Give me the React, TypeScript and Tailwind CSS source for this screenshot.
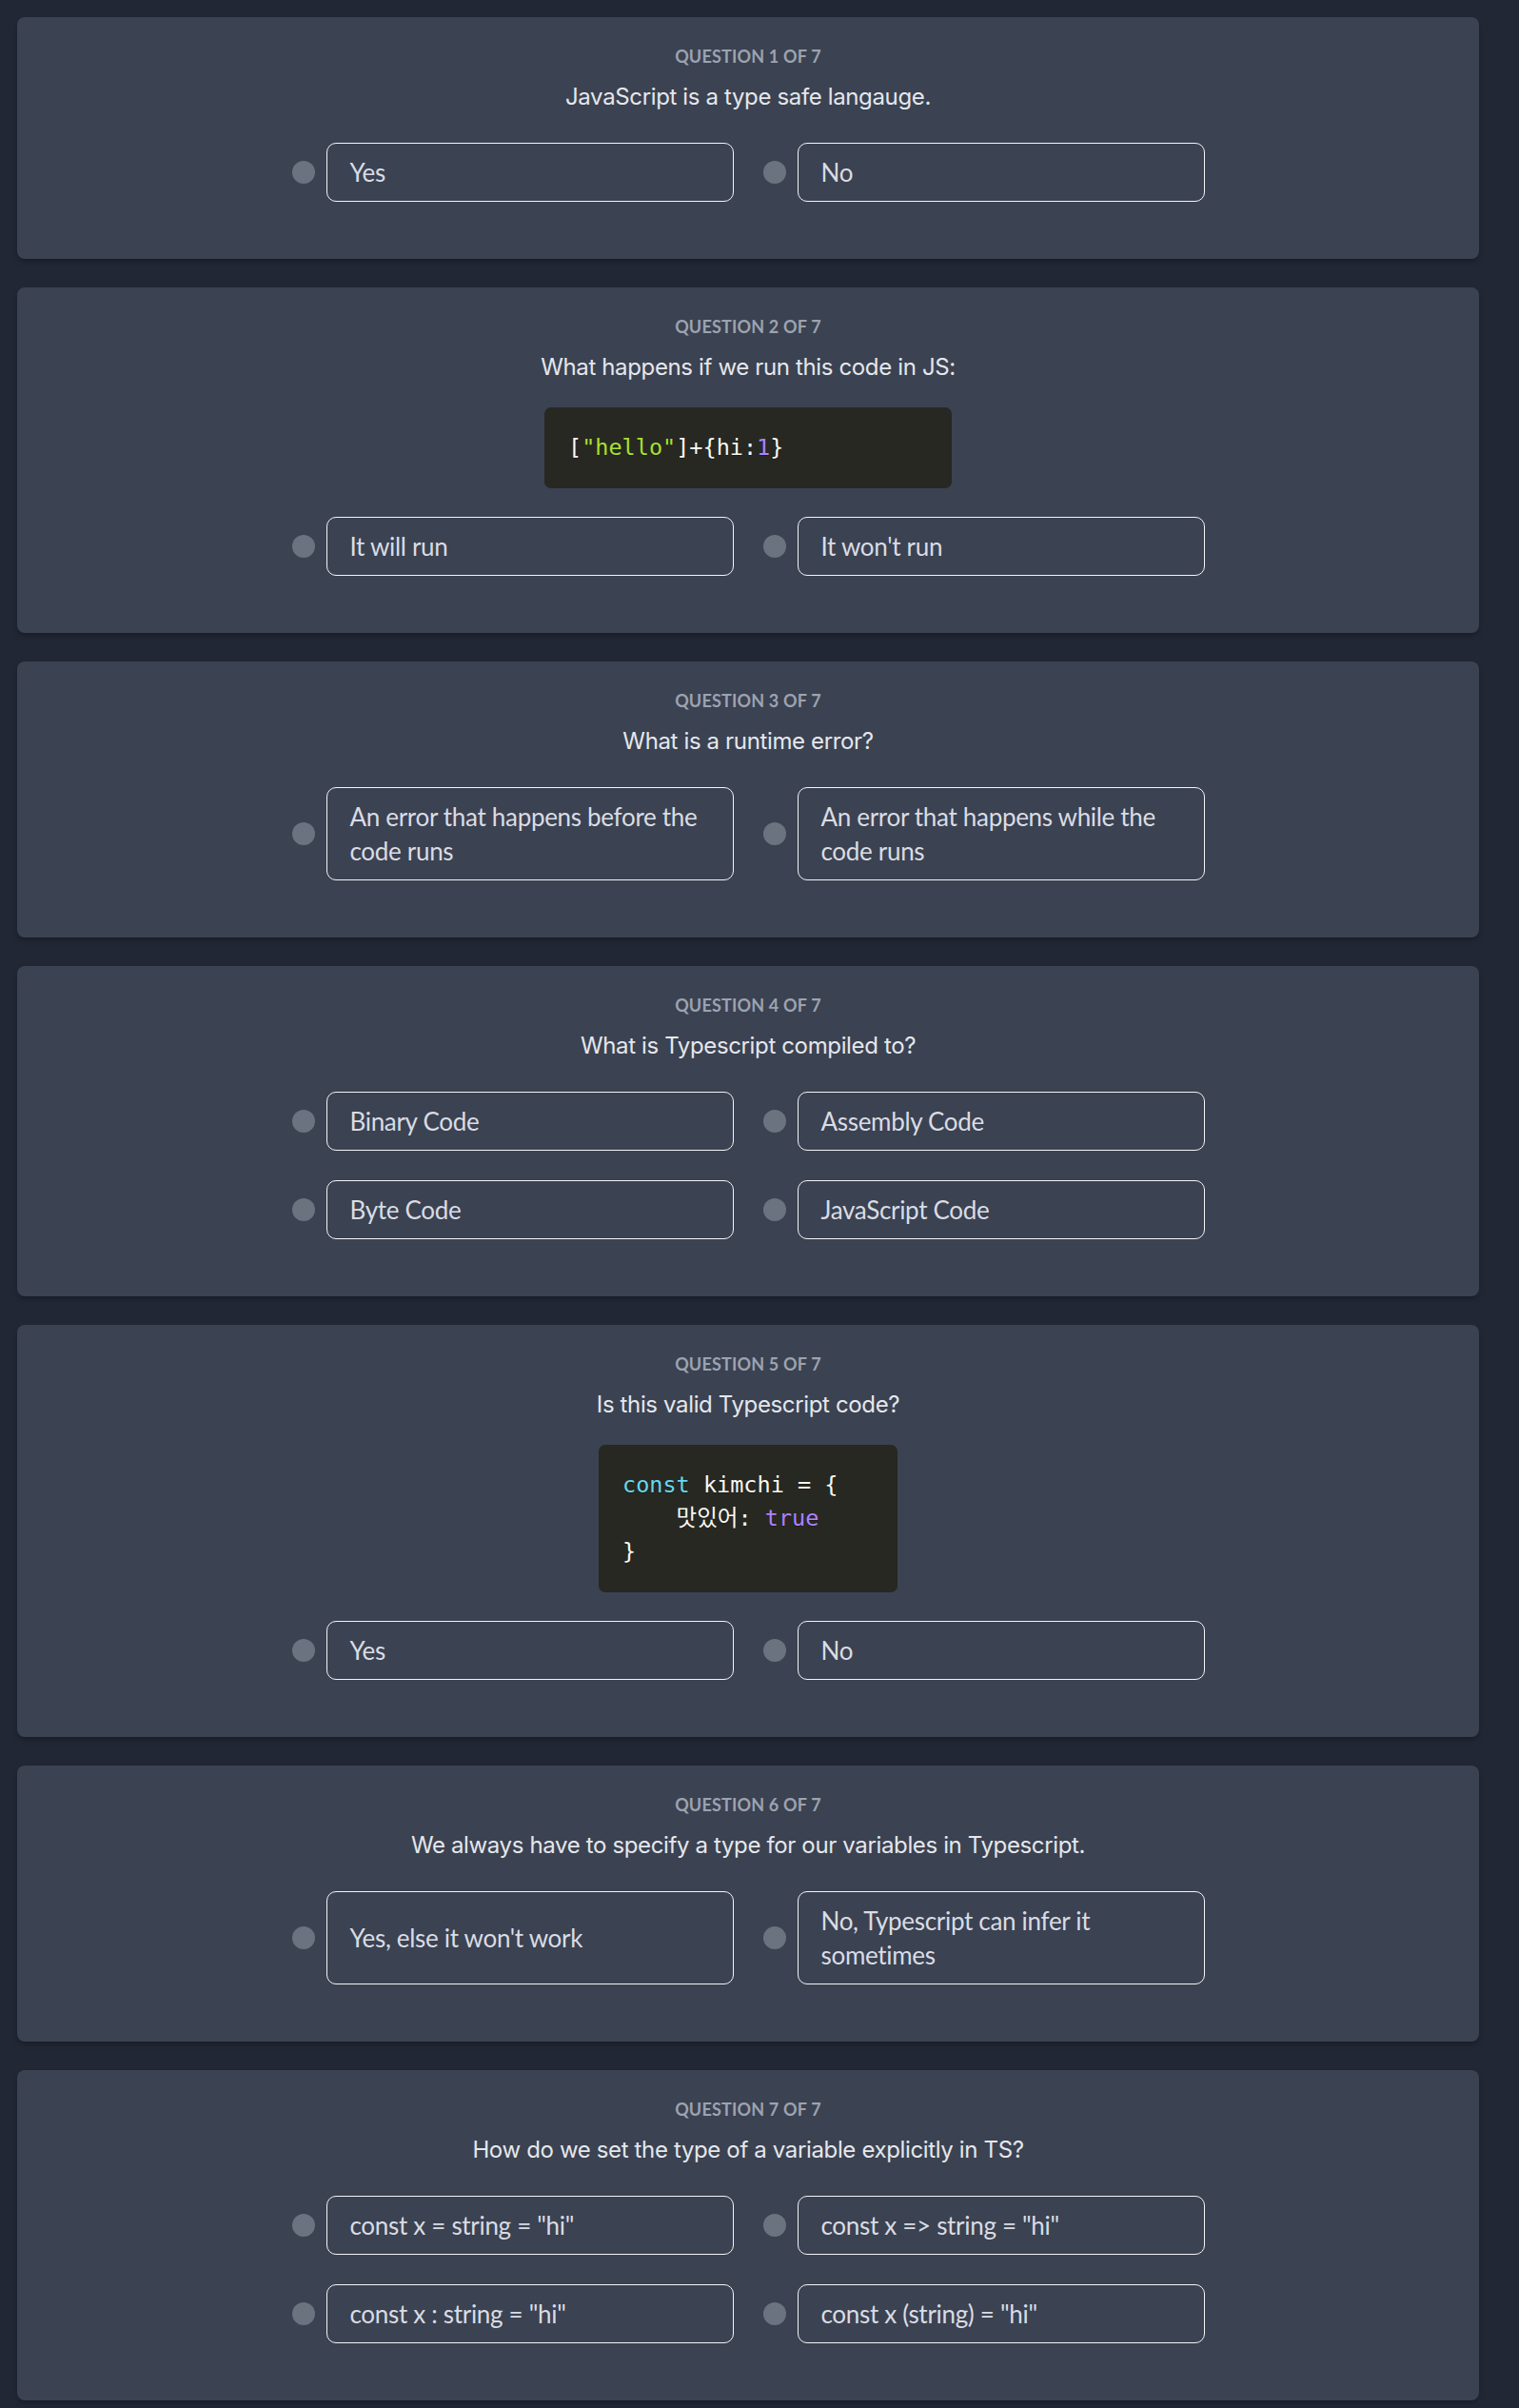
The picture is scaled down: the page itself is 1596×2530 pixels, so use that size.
type Token = { text: string; cls?: string };

type Question = {
  prompt: string;
  code?: { width: string; lines: Token[][] };
  options: string[];
};

const questions: Question[] = [
  {
    prompt: 'JavaScript is a type safe langauge.',
    options: ['Yes', 'No'],
  },
  {
    prompt: 'What happens if we run this code in JS:',
    code: {
      width: 'w-[428px]',
      lines: [
        [
          { text: '[' },
          { text: '"hello"', cls: 'text-[#a6e22e]' },
          { text: ']+{hi:' },
          { text: '1', cls: 'text-[#ae81ff]' },
          { text: '}' },
        ],
      ],
    },
    options: ['It will run', "It won't run"],
  },
  {
    prompt: 'What is a runtime error?',
    options: ['An error that happens before the code runs', 'An error that happens while the code runs'],
  },
  {
    prompt: 'What is Typescript compiled to?',
    options: ['Binary Code', 'Assembly Code', 'Byte Code', 'JavaScript Code'],
  },
  {
    prompt: 'Is this valid Typescript code?',
    code: {
      width: 'w-[314px]',
      lines: [
        [{ text: 'const', cls: 'text-[#66d9ef]' }, { text: ' kimchi = {' }],
        [{ text: '    맛있어: ' }, { text: 'true', cls: 'text-[#ae81ff]' }],
        [{ text: '}' }],
      ],
    },
    options: ['Yes', 'No'],
  },
  {
    prompt: 'We always have to specify a type for our variables in Typescript.',
    options: ["Yes, else it won't work", 'No, Typescript can infer it sometimes'],
  },
  {
    prompt: 'How do we set the type of a variable explicitly in TS?',
    options: ['const x = string = "hi"', 'const x => string = "hi"', 'const x : string = "hi"', 'const x (string) = "hi"'],
  },
];

const CodeBlock = ({ width, lines }: { width: string; lines: Token[][] }) => (
  <pre
    className={`${width} mb-6 rounded-[7px] bg-[#272822] px-[25px] py-[25px] text-left font-['DejaVu_Sans_Mono','Noto_Sans_CJK_KR',monospace] text-[23.5px] leading-[35px] whitespace-pre text-[#f8f8f2] [text-shadow:0_1px_rgba(0,0,0,0.3)]`}
  >
    {lines.map((line, i) => (
      <div key={i}>
        {line.map((tok, j) => (
          <span key={j} className={tok.cls}>
            {tok.text}
          </span>
        ))}
      </div>
    ))}
  </pre>
);

const Option = ({ label }: { label: string }) => (
  <label className="flex items-center gap-3">
    <span className="h-6 w-6 shrink-0 rounded-full bg-[#6b7280]" />
    <span className="flex w-[428px] items-center self-stretch rounded-[10px] border border-[#f3f4f6] px-6 py-3 font-['Lato',sans-serif] text-[26px] leading-[36px] tracking-[-0.012em] text-[#d9dce3]">
      {label}
    </span>
  </label>
);

export default function App() {
  return (
    <div className="min-h-screen bg-[#222736] px-[18px] pt-[18px] pb-[18px]">
      <div className="flex w-[1536px] flex-col gap-[30px]">
        {questions.map((q, i) => (
          <section
            key={i}
            className="flex flex-col items-center rounded-lg bg-[#3b4252] pt-[29px] pb-[60px] shadow-md shadow-black/20"
          >
            <p className="font-['Lato',sans-serif] text-[18px] leading-[24px] font-bold tracking-[0.01em] text-[#9ca3af] uppercase">
              Question {i + 1} of {questions.length}
            </p>
            <h2 className="mt-[15px] mb-[26px] font-['Inter',sans-serif] text-[24px] leading-[32px] tracking-[-0.015em] text-[#e5e7eb]">
              {q.prompt}
            </h2>
            {q.code && <CodeBlock width={q.code.width} lines={q.code.lines} />}
            <div className="mt-[6px] grid grid-cols-[464px_464px] gap-x-[31px] gap-y-[31px]">
              {q.options.map((opt) => (
                <Option key={opt} label={opt} />
              ))}
            </div>
          </section>
        ))}
      </div>
    </div>
  );
}
